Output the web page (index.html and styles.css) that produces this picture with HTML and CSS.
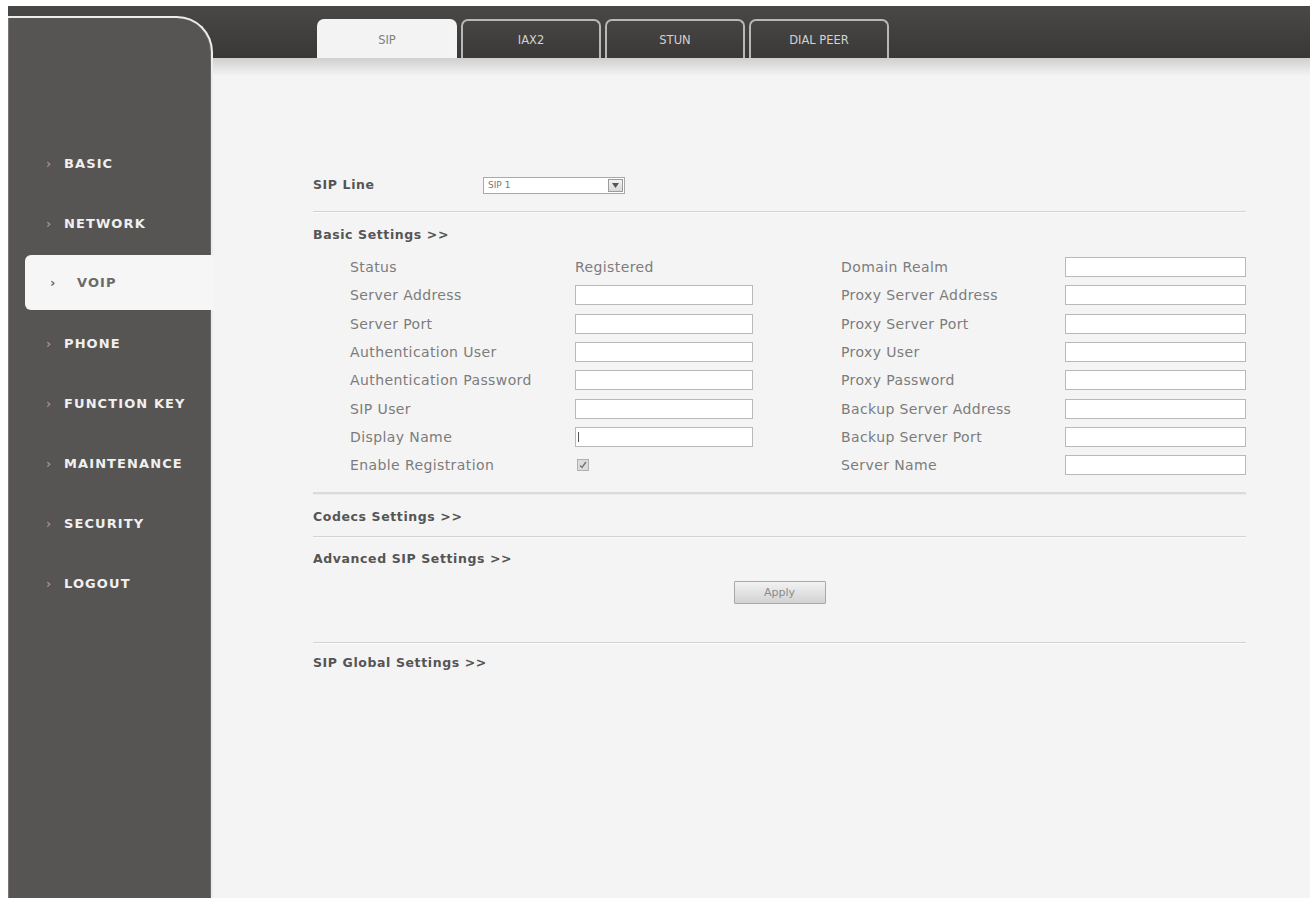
FILE: index.html
```html
<!DOCTYPE html>
<html lang="en">
<head>
<meta charset="utf-8">
<title>VoIP - SIP</title>
<link rel="stylesheet" href="styles.css">
</head>
<body>
<div class="app">
  <aside class="side-col">
    <nav class="sidebar">
      <ul class="menu">
        <li class="menu-item"><span class="chev">›</span>BASIC</li>
        <li class="menu-item"><span class="chev">›</span>NETWORK</li>
        <li class="menu-item active"><span class="chev">›</span>VOIP</li>
        <li class="menu-item"><span class="chev">›</span>PHONE</li>
        <li class="menu-item"><span class="chev">›</span>FUNCTION KEY</li>
        <li class="menu-item"><span class="chev">›</span>MAINTENANCE</li>
        <li class="menu-item"><span class="chev">›</span>SECURITY</li>
        <li class="menu-item"><span class="chev">›</span>LOGOUT</li>
      </ul>
    </nav>
  </aside>

  <main class="main">
    <header class="tabbar">
      <div class="tab active">SIP</div>
      <div class="tab">IAX2</div>
      <div class="tab">STUN</div>
      <div class="tab">DIAL PEER</div>
    </header>
    <div class="band"></div>

    <section class="content">
      <div class="line-row">
        <span class="heading line-label">SIP Line</span>
        <div class="select">
          <span class="select-value">SIP 1</span>
          <span class="select-btn">
            <svg width="7" height="5" viewBox="0 0 7 5"><path d="M0 0h7L3.5 5z" fill="#555"/></svg>
          </span>
        </div>
      </div>
      <div class="rule rule-a"></div>

      <div class="heading sec-basic">Basic Settings &gt;&gt;</div>

      <div class="fields">
        <span class="label">Status</span>
        <span class="value">Registered</span>
        <span></span>
        <span class="label">Domain Realm</span>
        <span class="field"></span>

        <span class="label">Server Address</span>
        <span class="field"></span>
        <span></span>
        <span class="label">Proxy Server Address</span>
        <span class="field"></span>

        <span class="label">Server Port</span>
        <span class="field"></span>
        <span></span>
        <span class="label">Proxy Server Port</span>
        <span class="field"></span>

        <span class="label">Authentication User</span>
        <span class="field"></span>
        <span></span>
        <span class="label">Proxy User</span>
        <span class="field"></span>

        <span class="label">Authentication Password</span>
        <span class="field"></span>
        <span></span>
        <span class="label">Proxy Password</span>
        <span class="field"></span>

        <span class="label">SIP User</span>
        <span class="field"></span>
        <span></span>
        <span class="label">Backup Server Address</span>
        <span class="field"></span>

        <span class="label">Display Name</span>
        <span class="field"><span class="caret"></span></span>
        <span></span>
        <span class="label">Backup Server Port</span>
        <span class="field"></span>

        <span class="label">Enable Registration</span>
        <span class="check-cell">
          <span class="check">
            <svg width="8" height="8" viewBox="0 0 8 8"><path d="M1 4.5l2 2L7 1" fill="none" stroke="#777" stroke-width="1.4"/></svg>
          </span>
        </span>
        <span></span>
        <span class="label">Server Name</span>
        <span class="field"></span>
      </div>

      <div class="rule rule-thick"></div>
      <div class="heading sec-codecs">Codecs Settings &gt;&gt;</div>
      <div class="rule rule-b"></div>
      <div class="heading sec-adv">Advanced SIP Settings &gt;&gt;</div>
      <div class="actions">
        <button class="apply" type="button">Apply</button>
      </div>
      <div class="rule rule-c"></div>
      <div class="heading sec-global">SIP Global Settings &gt;&gt;</div>
    </section>
  </main>
</div>
</body>
</html>
```
FILE: styles.css
```css
* { box-sizing: border-box; }

html, body {
  margin: 0;
  padding: 0;
  background: #ffffff;
  height: 100%;
  overflow: hidden;
}

body {
  font-family: "DejaVu Sans", Verdana, sans-serif;
  padding: 6px 2px 0 8px;
}

.app {
  display: grid;
  grid-template-columns: 205px 1fr;
  height: calc(100vh - 6px);
  background: #f4f4f4;
}

/* ---- left navigation ---- */
.side-col {
  display: flex;
  flex-direction: column;
  background: linear-gradient(#4a4747, #3a3737) no-repeat 0 0 / 100% 52px;
}

.sidebar {
  flex: 1;
  margin-top: 10px;
  background: #575454;
  border-top: 2px solid #ececec;
  border-right: 2px solid #ececec;
  border-top-right-radius: 36px;
  box-shadow: inset 1px 0 0 #7a7676, inset -1px 0 0 #6a6767;
  padding-top: 115px;
}

.menu {
  list-style: none;
  margin: 0;
  padding: 0;
}

.menu-item {
  height: 60px;
  display: flex;
  align-items: center;
  padding-left: 38px;
  color: #f0f0f0;
  font-weight: bold;
  font-size: 13px;
  letter-spacing: 1.1px;
}

.chev {
  width: 18px;
  color: #a9a5a5;
  font-weight: normal;
  font-size: 13px;
  letter-spacing: 0;
}

.menu-item.active {
  height: 55px;
  margin: 2px -2px 3px 17px;
  padding-left: 25px;
  background: #f6f6f6;
  border-radius: 6px 0 0 6px;
  color: #6a6a6a;
}

.menu-item.active .chev {
  width: 27px;
  color: #6a6a6a;
  font-weight: bold;
}

/* ---- tab strip ---- */
.main {
  display: flex;
  flex-direction: column;
  min-width: 0;
}

.tabbar {
  height: 52px;
  flex: none;
  display: flex;
  align-items: flex-end;
  gap: 4px;
  padding-left: 104px;
  background: linear-gradient(#4a4747, #3a3737);
}

.tab {
  width: 140px;
  height: 39px;
  display: flex;
  align-items: center;
  justify-content: center;
  border: 2px solid #b9b7b7;
  border-bottom: none;
  border-radius: 7px 7px 0 0;
  background: linear-gradient(#474444, #3b3838);
  color: #d2d2d2;
  font-size: 11.5px;
}

.tab.active {
  border-color: #f4f4f4;
  background: #f3f3f3;
  color: #808080;
}

.band {
  height: 18px;
  flex: none;
  background: linear-gradient(#d0cfcf, #f4f4f4);
}

/* ---- settings form ---- */
.content {
  padding: 97px 64px 0 100px;
  color: #7a7a7a;
}

.heading {
  font-weight: bold;
  font-size: 12.5px;
  letter-spacing: 0.6px;
  color: #555;
  height: 24px;
  line-height: 24px;
  white-space: nowrap;
}

.line-row {
  display: flex;
  align-items: center;
  height: 24px;
}

.line-label {
  width: 170px;
}

.select {
  width: 142px;
  height: 17px;
  display: flex;
  align-items: center;
  justify-content: space-between;
  background: #fff;
  border: 1px solid #a9a9a9;
  padding: 0 1px 0 4px;
}

.select-value {
  font-size: 9px;
  color: #777;
}

.select-btn {
  width: 15px;
  height: 13px;
  display: flex;
  align-items: center;
  justify-content: center;
  background: linear-gradient(#f2f2f2, #d8d8d8);
  border: 1px solid #9c9c9c;
}

.rule {
  border-top: 1px solid #d3d3d3;
  border-bottom: 1px solid #fbfbfb;
}

.rule-a { margin-top: 14px; }
.sec-basic { margin-top: 10px; }

.fields {
  margin-top: 6px;
  display: grid;
  grid-template-columns: 225px 178px 88px 224px 181px;
  grid-auto-rows: 28.3px;
  align-items: center;
  padding-left: 37px;
  font-size: 14px;
  letter-spacing: 0.4px;
  color: #7c7c7c;
}

.label, .value {
  white-space: nowrap;
}

.field {
  height: 20px;
  background: #fff;
  border: 1px solid #b9b9b9;
  display: flex;
  align-items: center;
  padding-left: 2px;
}

.caret {
  width: 1px;
  height: 10px;
  background: #555;
}

.check-cell {
  display: flex;
  align-items: center;
  padding-left: 2px;
}

.check {
  width: 12px;
  height: 12px;
  border: 1px solid #b0b0b0;
  background: #dcdcdc;
  display: flex;
  align-items: center;
  justify-content: center;
}

.rule-thick {
  margin-top: 13px;
  border-top: 2px solid #dadada;
  border-bottom: 1px solid #ececec;
}

.sec-codecs { margin-top: 10px; }
.rule-b { margin-top: 7px; }
.sec-adv { margin-top: 9px; }

.actions {
  margin-top: 10px;
  display: flex;
  justify-content: center;
}

.apply {
  width: 92px;
  height: 23px;
  border: 1px solid #a8a8a8;
  border-radius: 1px;
  background: linear-gradient(#f2f2f2, #d2d2d2);
  font-family: "DejaVu Sans", Verdana, sans-serif;
  font-size: 11px;
  color: #8a8a8a;
  padding: 0;
}

.rule-c { margin-top: 38px; }
.sec-global { margin-top: 7px; }
```
